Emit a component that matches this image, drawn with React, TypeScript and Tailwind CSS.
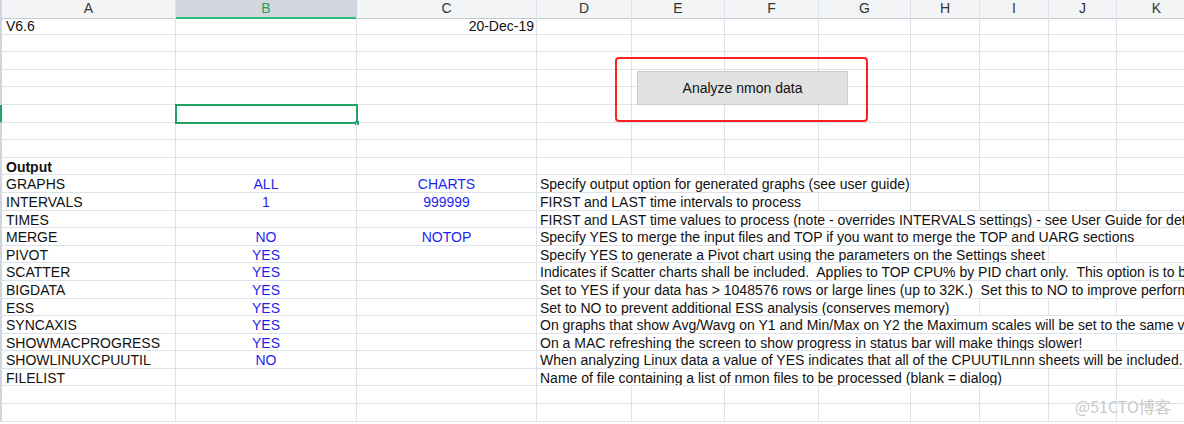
import React from "react";

type Row = {
  a?: string;
  b?: string;
  c?: string;
  cRight?: boolean;
  d?: string;
  span?: number;
  bold?: boolean;
  selected?: boolean;
};

const GRID =
  "grid grid-cols-[2px_174px_181px_180px_95px_93px_94px_92px_69px_69px_68px_80px]";

const HEADERS = ["A", "B", "C", "D", "E", "F", "G", "H", "I", "J", "K"];

const SPAN: Record<number, string> = {
  3: "col-span-3",
  4: "col-span-4",
  5: "col-span-5",
  6: "col-span-6",
  7: "col-span-7",
  8: "col-span-8",
};

const rows: Row[] = [
  { a: "V6.6", c: "20-Dec-19", cRight: true },
  {},
  {},
  {},
  {},
  { selected: true },
  {},
  {},
  { a: "Output", bold: true },
  { a: "GRAPHS", b: "ALL", c: "CHARTS", d: "Specify output option for generated graphs (see user guide)", span: 4 },
  { a: "INTERVALS", b: "1", c: "999999", d: "FIRST and LAST time intervals to process", span: 3 },
  { a: "TIMES", d: "FIRST and LAST time values to process (note - overrides INTERVALS settings) - see User Guide for details", span: 8 },
  { a: "MERGE", b: "NO", c: "NOTOP", d: "Specify YES to merge the input files and TOP if you want to merge the TOP and UARG sections", span: 8 },
  { a: "PIVOT", b: "YES", d: "Specify YES to generate a Pivot chart using the parameters on the Settings sheet", span: 6 },
  { a: "SCATTER", b: "YES", d: "Indicates if Scatter charts shall be included.  Applies to TOP CPU% by PID chart only.  This option is to be used", span: 8 },
  { a: "BIGDATA", b: "YES", d: "Set to YES if your data has > 1048576 rows or large lines (up to 32K.)  Set this to NO to improve performance", span: 8 },
  { a: "ESS", b: "YES", d: "Set to NO to prevent additional ESS analysis (conserves memory)", span: 5 },
  { a: "SYNCAXIS", b: "YES", d: "On graphs that show Avg/Wavg on Y1 and Min/Max on Y2 the Maximum scales will be set to the same value", span: 8 },
  { a: "SHOWMACPROGRESS", b: "YES", d: "On a MAC refreshing the screen to show progress in status bar will make things slower!", span: 7 },
  { a: "SHOWLINUXCPUUTIL", b: "NO", d: "When analyzing Linux data a value of YES indicates that all of the CPUUTILnnn sheets will be included.  (default", span: 8 },
  { a: "FILELIST", d: "Name of file containing a list of nmon files to be processed (blank = dialog)", span: 6 },
  {},
  {},
];

const cell = "h-[17.6px] border-r border-b border-[#dde1ea] leading-[19px] whitespace-pre";

function SheetRow({ row }: { row: Row }) {
  const rest = row.d ? 8 - (row.span ?? 1) : 7;
  return (
    <div className={GRID}>
      <div className={`h-[17.6px] border-r-2 border-b ${row.selected ? "border-r-[#21a366] border-b-[#dde1ea]" : "border-r-[#d0d4dc] border-b-[#dde1ea]"}`} />
      <div className={`${cell} pl-[4px] overflow-hidden ${row.bold ? "font-bold" : ""}`}>{row.a}</div>
      <div className={`${cell} relative text-center text-[#1f1fee]`}>
        {row.b}
        {row.selected && (
          <div className="absolute -left-px -top-px w-[183px] h-[20px] border-2 border-[#21a366]">
            <div className="absolute -right-[3px] -bottom-[3px] w-[4px] h-[4px] bg-[#21a366]" />
          </div>
        )}
      </div>
      <div className={`${cell} ${row.cRight ? "text-right pr-[2px]" : "text-center text-[#1f1fee]"}`}>{row.c}</div>
      {row.d ? (
        <div className={`${cell} ${SPAN[row.span ?? 8]} pl-[3px] overflow-hidden`}>{row.d}</div>
      ) : (
        <div className={cell} />
      )}
      {Array.from({ length: rest }).map((_, i) => (
        <div key={i} className={cell} />
      ))}
    </div>
  );
}

export default function App() {
  return (
    <div className="relative w-[1184px] h-[424px] overflow-hidden bg-white text-[14px] text-[#111] font-['Liberation_Sans',Arial,sans-serif]">
      <div className={`${GRID} h-[17px]`}>
        <div className="bg-[#f3f4f6] border-r-2 border-[#d0d4dc] border-b border-b-[#c5c9d0]" />
        {HEADERS.map((h) =>
          h === "B" ? (
            <div
              key={h}
              className="bg-[#d3d6dd] text-[#1e9e60] text-center leading-[17px] border-r border-[#c9ccd3] border-b-2 border-b-[#2bbd7e]"
            >
              {h}
            </div>
          ) : (
            <div
              key={h}
              className="bg-[#f3f4f6] text-[#333] text-center leading-[17px] border-r border-[#dde1ea] border-b border-b-[#c5c9d0]"
            >
              {h}
            </div>
          )
        )}
      </div>

      {rows.map((r, i) => (
        <SheetRow key={i} row={r} />
      ))}

      {/* button + highlight */}
      <div className="absolute left-[615px] top-[57px] w-[253px] h-[65px] border-2 border-[#ff1f1f] rounded-[4px]" />
      <div className="absolute left-[637px] top-[71px] w-[211px] h-[34px] bg-[#e1e1e1] border border-[#cdcdcd] flex items-center justify-center text-[14px] text-[#111]">
        Analyze nmon data
      </div>

      <div className="absolute left-[1075px] top-[396px] text-[16px] text-[#c9c9c9] font-['Noto_Sans_CJK_SC',sans-serif] leading-[20px]">
        @51CTO博客
      </div>
    </div>
  );
}
